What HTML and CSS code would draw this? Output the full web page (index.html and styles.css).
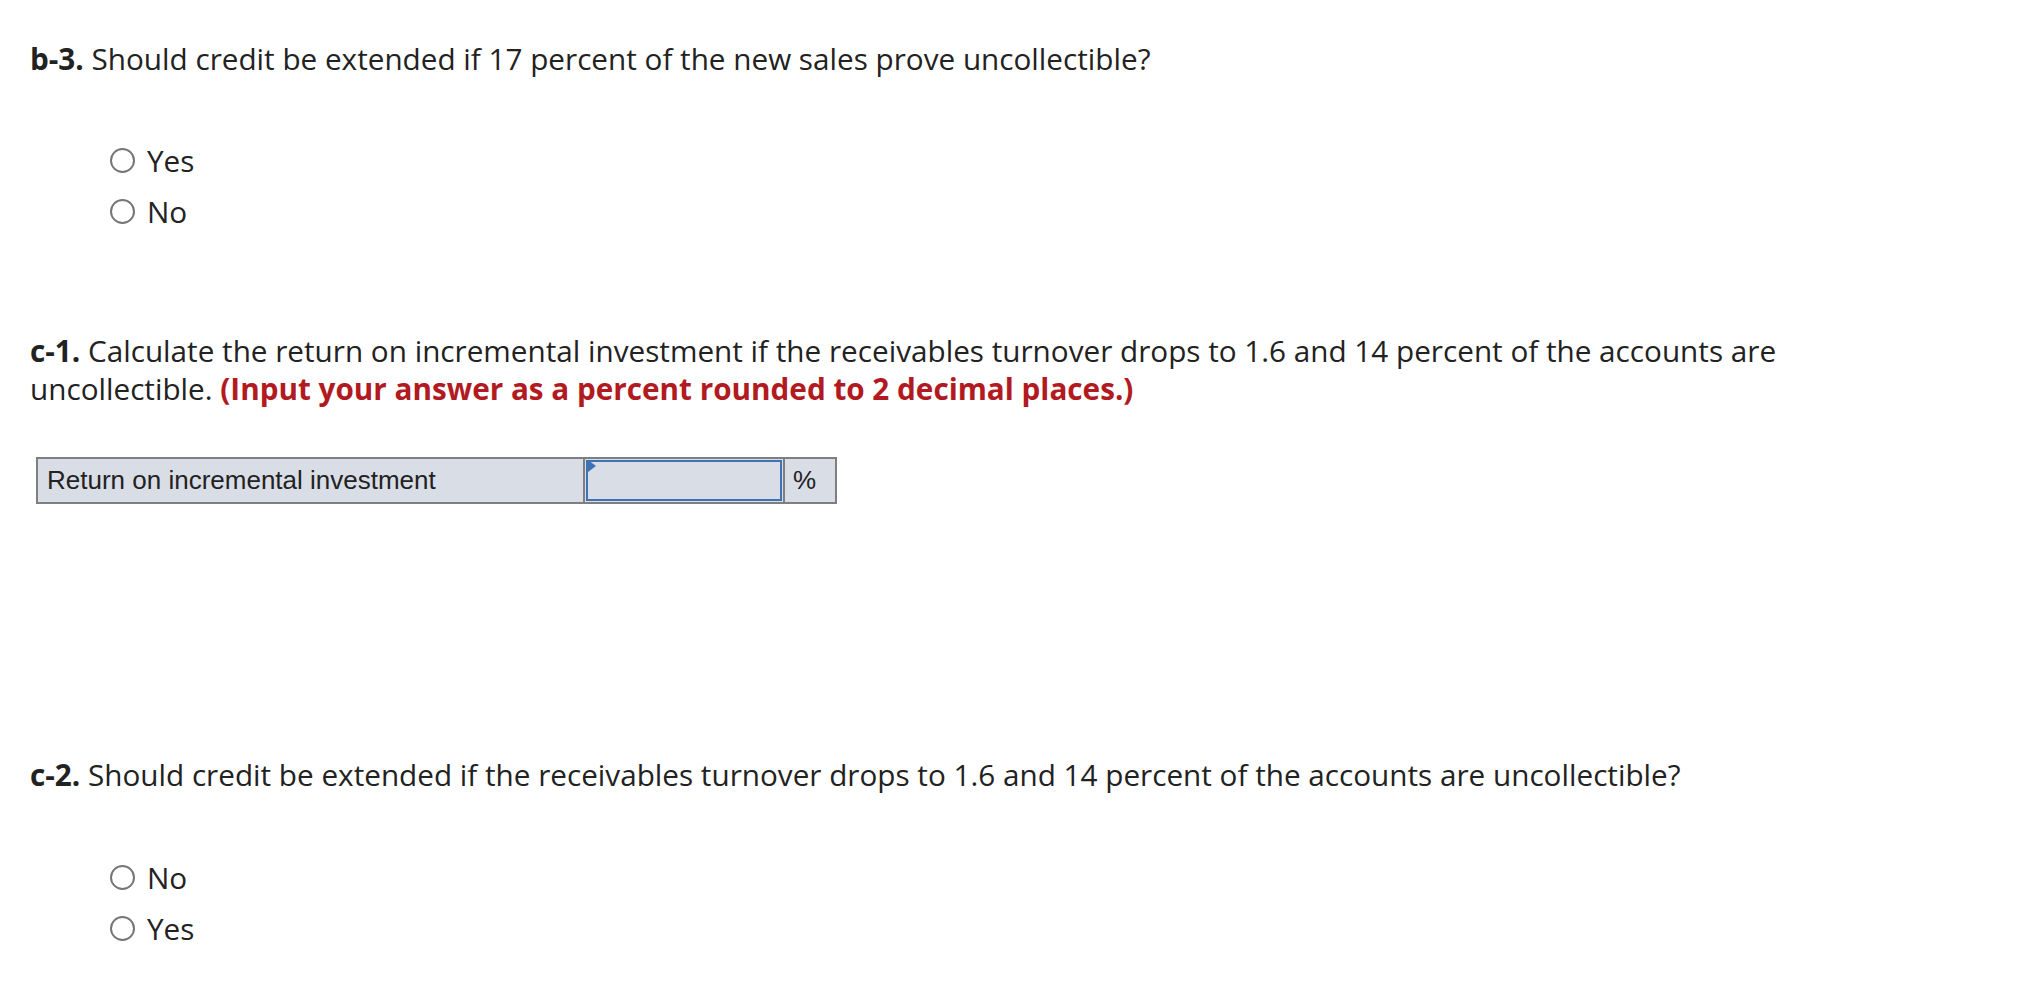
FILE: index.html
```html
<!DOCTYPE html>
<html lang="en">
<head>
<meta charset="utf-8">
<title>Credit questions</title>
<link rel="stylesheet" href="styles.css">
</head>
<body>
<div class="page">
  <p class="q q-b3"><b>b-3.</b> Should credit be extended if 17 percent of the new sales prove uncollectible?</p>
  <div class="opts opts-b3">
    <label class="opt"><span class="radio"></span><span class="opt-text">Yes</span></label>
    <label class="opt"><span class="radio"></span><span class="opt-text">No</span></label>
  </div>

  <p class="q q-c1"><b>c-1.</b> Calculate the return on incremental investment if the receivables turnover drops to 1.6 and 14 percent of the accounts are uncollectible. <b class="hint">(Input your answer as a percent rounded to 2 decimal places.)</b></p>

  <table class="ans">
    <tr>
      <td class="ans-label">Return on incremental investment</td>
      <td class="ans-input"><div class="input-box"><span class="flag"></span></div></td>
      <td class="ans-unit">%</td>
    </tr>
  </table>

  <p class="q q-c2"><b>c-2.</b> Should credit be extended if the receivables turnover drops to 1.6 and 14 percent of the accounts are uncollectible?</p>
  <div class="opts opts-c2">
    <label class="opt"><span class="radio"></span><span class="opt-text">No</span></label>
    <label class="opt"><span class="radio"></span><span class="opt-text">Yes</span></label>
  </div>
</div>
</body>
</html>
```

FILE: styles.css
```css
html, body {
  margin: 0;
  padding: 0;
  background: #ffffff;
}

.page {
  padding: 40px 0 0 30px;
  width: 1840px;
  font-family: "Open Sans", "Liberation Sans", sans-serif;
  font-size: 29.7px;
  color: #222222;
}

.q {
  margin: 0;
  line-height: 38px;
}

.q b {
  font-weight: 700;
}

.q .hint {
  color: #b21a21;
}

.opts {
  display: flex;
  flex-direction: column;
  padding-left: 80px;
}

.opts-b3 {
  margin-top: 57px;
}

.opts-c2 {
  margin-top: 58px;
}

.opt {
  display: flex;
  align-items: center;
  height: 51px;
  line-height: 51px;
}

.radio {
  box-sizing: border-box;
  width: 25px;
  height: 25px;
  border: 2px solid #767676;
  border-radius: 50%;
  background: #ffffff;
  margin-right: 12px;
  flex: none;
}

.q-c1 {
  margin-top: 95px;
}

.ans {
  margin: 49px 0 0 6px;
  border-collapse: collapse;
  font-family: "Liberation Sans", Arial, sans-serif;
  font-size: 26px;
  color: #222222;
  background: #d9dde6;
}

.ans td {
  border: 2px solid #7f7f7f;
  height: 43px;
  padding: 0;
  box-sizing: border-box;
}

.ans-label {
  width: 547px;
  padding-left: 9px !important;
}

.ans-input {
  width: 200px;
}

.input-box {
  position: relative;
  box-sizing: border-box;
  margin: 1px;
  height: 41px;
  border: 2px solid #3d72b4;
  background: #d9dde6;
}

.flag {
  position: absolute;
  left: 0;
  top: 0;
  width: 0;
  height: 0;
  border-top: 6px solid transparent;
  border-bottom: 6px solid transparent;
  border-left: 8px solid #3d72b4;
  margin-top: -2px;
}

.ans-unit {
  width: 52px;
  padding-left: 8px !important;
}

.q-c2 {
  margin-top: 252px;
}
```
